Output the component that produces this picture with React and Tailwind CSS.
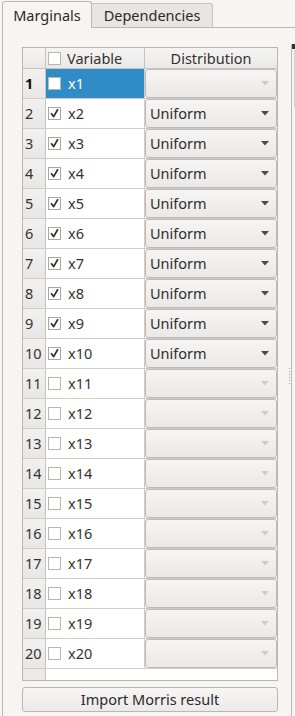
import React from "react";

const rows = Array.from({ length: 20 }, (_, i) => i + 1);

function Check({ checked }) {
  return (
    <div className={`w-[13px] h-[13px] border bg-white flex items-center justify-center shrink-0 ${checked ? "border-[#a9a6a3]" : "border-[#b8b5b2]"}`}>
      {checked && (
        <svg width="11" height="11" viewBox="0 0 11 11">
          <path d="M2.5 5.8 L4.6 8.6 L8.6 1.8" fill="none" stroke="#2e2e2e" strokeWidth="1.7" strokeLinecap="round" strokeLinejoin="round" />
        </svg>
      )}
    </div>
  );
}

function Combo({ enabled }) {
  return (
    <div className="h-full w-full border border-[#bdbab7] rounded-[3px] bg-gradient-to-b from-[#f6f5f4] to-[#ebe9e7] flex items-center pl-[4px] pr-[7px]">
      <span className="flex-1 text-[#2e2e2e]">{enabled ? "Uniform" : ""}</span>
      <svg width="8" height="5" viewBox="0 0 8 5">
        <path d="M0 0 L8 0 L4 4.5 Z" fill={enabled ? "#4a4a4a" : "#cfcdcb"} />
      </svg>
    </div>
  );
}

export default function App() {
  return (
    <div className="w-[295px] h-[716px] overflow-hidden bg-[#f7f4f1] text-[14.5px] leading-none text-[#333] font-['Noto_Sans',sans-serif]">
      <div className="flex items-end h-[27px] pl-[2px]">
        <div className="relative z-10 translate-y-px h-[27px] w-[90px] border border-b-0 border-[#bcb8b4] rounded-t-[3px] bg-[#f7f4f1] flex items-center justify-center text-[#2a2a2a]">
          Marginals
        </div>
        <div className="h-[24px] w-[121px] border border-l-0 border-b-0 border-[#c6c2be] rounded-tr-[3px] bg-[#e8e5e2] flex items-center justify-center text-[#2a2a2a]">
          Dependencies
        </div>
      </div>
      <div className="flex h-[689px] ml-[2px] border-l border-t border-[#bcb8b4]">
        <div className="flex flex-col pl-[19px] pt-[19px]">
          <div className="w-[256px] border border-[#b9b6b3] bg-white flex flex-col">
            <div className="flex h-[21px] border-b border-[#c6c3c0] bg-gradient-to-b from-[#f5f4f3] to-[#ebe9e7]">
              <div className="w-[23px] border-r border-[#c6c3c0]" />
              <div className="w-[99px] border-r border-[#c6c3c0] flex items-center pl-[2px] gap-[6px]">
                <Check />
                <span>Variable</span>
              </div>
              <div className="flex-1 flex items-center justify-center">Distribution</div>
            </div>
            {rows.map((r) => {
              const sel = r === 1;
              const checked = r >= 2 && r <= 10;
              return (
                <div key={r} className="flex h-[30px] border-b border-[#cfccc9]">
                  <div className={`w-[23px] border-r border-[#c6c3c0] bg-gradient-to-b from-[#f3f1ef] to-[#e9e7e5] flex items-center pl-[2px] ${sel ? "font-bold text-[#111]" : ""}`}>
                    {r}
                  </div>
                  <div className={`w-[99px] border-r border-[#cfccc9] flex items-center pl-[2px] gap-[7px] ${sel ? "bg-[#308cc6] text-white" : ""}`}>
                    <Check checked={checked} />
                    <span>x{r}</span>
                  </div>
                  <div className="flex-1">
                    <Combo enabled={checked} />
                  </div>
                </div>
              );
            })}
            <div className="flex h-[11px]">
              <div className="w-[23px] bg-[#eceae8] border-r border-[#c6c3c0]" />
              <div className="flex-1" />
            </div>
          </div>
          <div className="mt-[6px] w-[256px] h-[25px] border border-[#b9b6b3] rounded-[3px] bg-gradient-to-b from-[#f7f6f5] to-[#eceae8] flex items-center justify-center text-[#2a2a2a]">
            Import Morris result
          </div>
        </div>
        <div className="w-[13px] flex flex-col items-end justify-center pr-[1px] gap-[2px] pt-[8px]">
          <div className="w-px h-px bg-[#a9a6a3]" />
          <div className="w-px h-px bg-[#a9a6a3]" />
          <div className="w-px h-px bg-[#a9a6a3]" />
          <div className="w-px h-px bg-[#a9a6a3]" />
          <div className="w-px h-px bg-[#a9a6a3]" />
          <div className="w-px h-px bg-[#a9a6a3]" />
        </div>
        <div className="flex-1 mt-[16px] border-l border-[#bcb8b4] flex flex-col">
          <div className="w-[3px] h-[5px] bg-[#333]" />
          <div className="ml-[2px] mt-[1px] h-[57px] border-l border-t border-[#d3d0cd]" />
        </div>
      </div>
    </div>
  );
}
